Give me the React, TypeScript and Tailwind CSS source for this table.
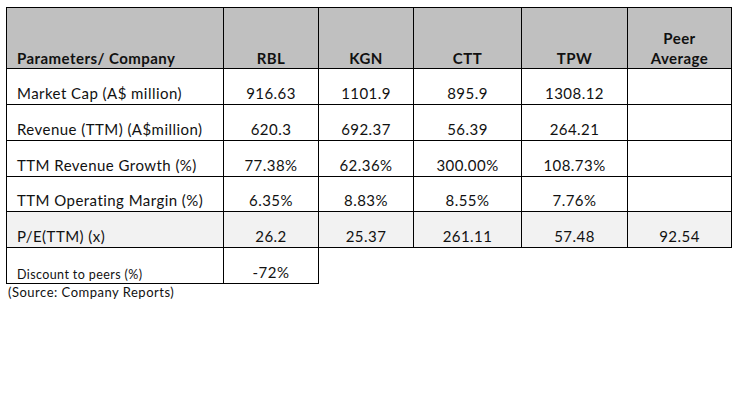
const rows = [
  { label: "Market Cap (A$ million)", values: ["916.63", "1101.9", "895.9", "1308.12", ""], h: "h-[36px]" },
  { label: "Revenue (TTM) (A$million)", values: ["620.3", "692.37", "56.39", "264.21", ""], h: "h-[36px]" },
  { label: "TTM Revenue Growth (%)", values: ["77.38%", "62.36%", "300.00%", "108.73%", ""], h: "h-[36px]" },
  { label: "TTM Operating Margin (%)", values: ["6.35%", "8.83%", "8.55%", "7.76%", ""], h: "h-[35px]" },
];

const cell = "border border-black text-center align-bottom pb-[1px]";
const head = "border border-black text-center align-bottom pb-0";

export default function App() {
  return (
    <div className="w-[742px] h-[400px] bg-white pt-[7px] pl-[6px] font-['Lato',sans-serif] text-[15px] leading-[20px] tracking-[0.45px] text-[#111]">
      <table className="border-collapse table-fixed">
        <colgroup>
          <col className="w-[217px]" />
          <col className="w-[95px]" />
          <col className="w-[95px]" />
          <col className="w-[108px]" />
          <col className="w-[106px]" />
          <col className="w-[104px]" />
        </colgroup>
        <tbody>
          <tr className="h-[61px] bg-[#c0c0c0] font-bold">
            <td className="border border-black align-bottom pl-[10px] pb-0">Parameters/ Company</td>
            <td className={head}>RBL</td>
            <td className={head}>KGN</td>
            <td className={head}>CTT</td>
            <td className={head}>TPW</td>
            <td className={head}>
              Peer
              <br />
              Average
            </td>
          </tr>
          {rows.map((r) => (
            <tr key={r.label} className={r.h}>
              <td className="border border-black align-bottom pl-[10px] pb-[1px] whitespace-nowrap">{r.label}</td>
              {r.values.map((v, i) => (
                <td key={i} className={cell}>
                  {v}
                </td>
              ))}
            </tr>
          ))}
          <tr className="h-[36px] bg-[#f2f2f2]">
            <td className="border border-black align-bottom pl-[10px] pb-[1px]">P/E(TTM) (x)</td>
            <td className={cell}>26.2</td>
            <td className={cell}>25.37</td>
            <td className={cell}>261.11</td>
            <td className={cell}>57.48</td>
            <td className={cell}>92.54</td>
          </tr>
          <tr className="h-[36px]">
            <td className="border border-black align-bottom pl-[10px] pb-0 text-[12.5px] leading-[16px] tracking-[0.4px]">
              Discount to peers (%)
            </td>
            <td className={cell}>-72%</td>
            <td colSpan={4} className="border-t border-black" />
          </tr>
        </tbody>
      </table>
      <p className="text-[13px] tracking-[0.5px] pl-[2px] leading-[16px]">(Source: Company Reports)</p>
    </div>
  );
}
